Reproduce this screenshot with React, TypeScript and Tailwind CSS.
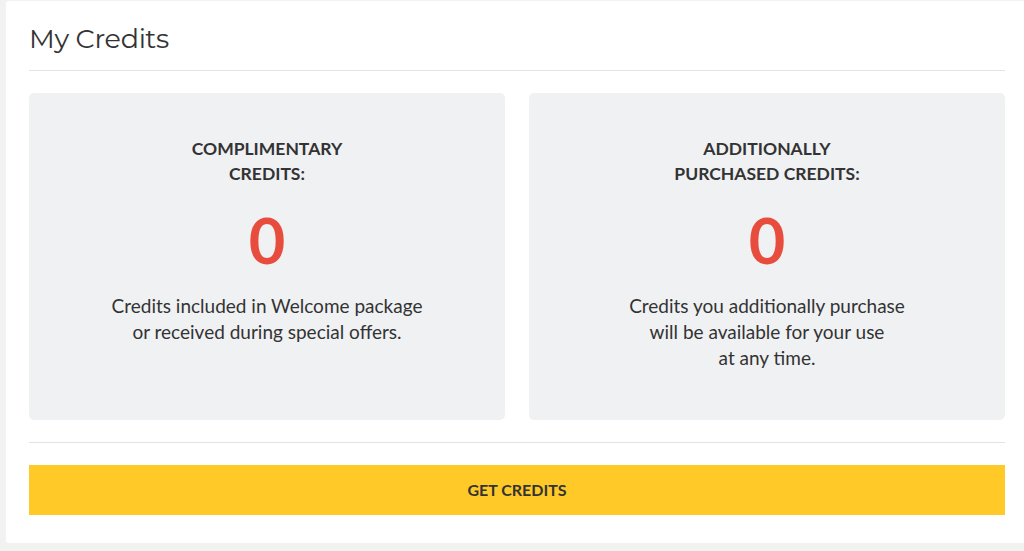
export default function App() {
  const boxes = [
    {
      title: ["COMPLIMENTARY", "CREDITS:"],
      value: 0,
      text: ["Credits included in Welcome package", "or received during special offers."],
    },
    {
      title: ["ADDITIONALLY", "PURCHASED CREDITS:"],
      value: 0,
      text: ["Credits you additionally purchase", "will be available for your use", "at any time."],
    },
  ];

  return (
    <div className="min-h-[551px] w-[1024px] overflow-hidden bg-[#f2f2f3] pt-px">
      <div className="ml-[6px] w-[1018px] bg-white pl-[23px] pr-[14px] pb-[28px] pt-[20px] rounded-tl-[3px] rounded-bl-[3px]">
        <h1 className="text-[27px] leading-[36px] text-[#333] font-['Montserrat','DejaVu_Sans',sans-serif] tracking-[-0.3px]">
          My Credits
        </h1>
        <div className="mt-[13px] h-px w-[976px] bg-[#e3e3e5]" />

        <div className="mt-[22px] grid w-[976px] grid-cols-2 gap-[24px]">
          {boxes.map((b) => (
            <div
              key={b.title[0]}
              className="flex h-[327px] flex-col items-center rounded-[5px] bg-[#f0f1f3] pt-[43px] text-center text-[#333] font-['Lato','Open_Sans',sans-serif]"
            >
              <div className="text-[17.5px] font-bold leading-[25px]">
                {b.title.map((t) => (
                  <div key={t}>{t}</div>
                ))}
              </div>
              <div className="mt-[14px] text-[63px] font-bold leading-[80px] text-[#e84c3d]">
                {b.value}
              </div>
              <div className="mt-[13px] text-[19px] leading-[26px]">
                {b.text.map((t) => (
                  <div key={t}>{t}</div>
                ))}
              </div>
            </div>
          ))}
        </div>

        <div className="mt-[22px] h-px w-[976px] bg-[#e3e3e5]" />

        <button className="mt-[22px] flex h-[50px] w-[976px] items-center justify-center bg-[#ffca28] text-[16px] font-bold text-[#333] font-['Lato','Open_Sans',sans-serif]">
          GET CREDITS
        </button>
      </div>
    </div>
  );
}
